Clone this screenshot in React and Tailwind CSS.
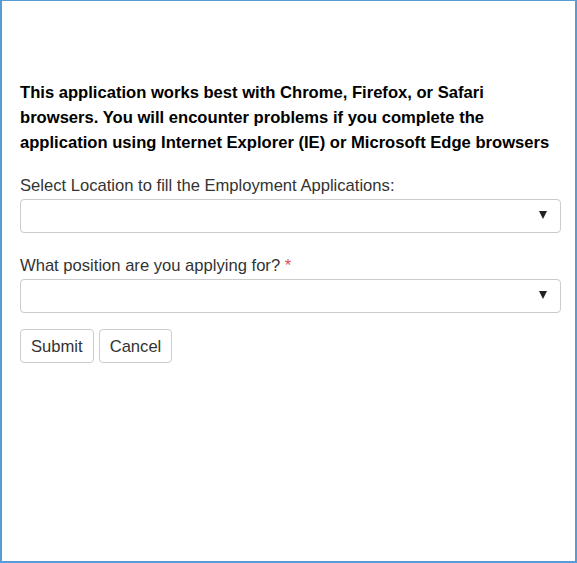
import React, { useState } from "react";

export default function App() {
  const [location, setLocation] = useState("");
  const [position, setPosition] = useState("");

  return (
    <div
      className="w-[577px] h-[563px] bg-white border-2 border-t border-[#5b9bd5] pl-[18px] pr-[14px] pt-[79px]"
      style={{ fontFamily: '"Liberation Sans", Arial, sans-serif' }}
    >
      {/* BROWSER NOTICE */}
      <p className="text-[16.6px] leading-[25px] font-bold text-black">
        This application works best with Chrome, Firefox, or Safari browsers. You will encounter problems if you complete the application using Internet Explorer (IE) or Microsoft Edge browsers
      </p>

      {/* LOCATION */}
      <div className="mt-[20px]">
        <label className="block text-[16.6px] leading-[22px] text-[#333]">
          Select Location to fill the Employment Applications:
        </label>
        <div className="relative mt-[2px]">
          <select
            value={location}
            onChange={(e) => setLocation(e.target.value)}
            className="w-full h-[34px] appearance-none bg-white border border-[#ccc] rounded-[4px] px-3 text-[16px] text-[#333] outline-none"
          >
            <option value=""></option>
          </select>
          <span className="pointer-events-none absolute right-[14px] top-[12px] w-0 h-0 border-l-[4px] border-r-[4px] border-t-[8px] border-l-transparent border-r-transparent border-t-[#222]" />
        </div>
      </div>

      {/* POSITION */}
      <div className="mt-[22px]">
        <label className="block text-[16.6px] leading-[22px] text-[#333]">
          What position are you applying for? <span className="text-[#d9534f]">*</span>
        </label>
        <div className="relative mt-[2px]">
          <select
            value={position}
            onChange={(e) => setPosition(e.target.value)}
            className="w-full h-[34px] appearance-none bg-white border border-[#ccc] rounded-[4px] px-3 text-[16px] text-[#333] outline-none"
          >
            <option value=""></option>
          </select>
          <span className="pointer-events-none absolute right-[14px] top-[12px] w-0 h-0 border-l-[4px] border-r-[4px] border-t-[8px] border-l-transparent border-r-transparent border-t-[#222]" />
        </div>
      </div>

      {/* BUTTONS */}
      <div className="flex gap-[5px] mt-[16px]">
        <button className="h-[34px] px-[10px] pt-[3px] bg-white border border-[#ccc] rounded-[4px] text-[16.6px] text-[#333]">
          Submit
        </button>
        <button className="h-[34px] px-[10px] pt-[3px] bg-white border border-[#ccc] rounded-[4px] text-[16.6px] text-[#333]">
          Cancel
        </button>
      </div>
    </div>
  );
}
